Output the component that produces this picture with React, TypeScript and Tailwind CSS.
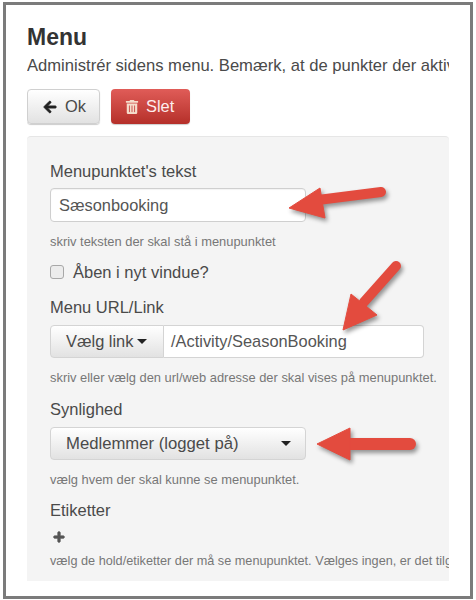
import { FaArrowLeft, FaTrashAlt, FaPlus } from "react-icons/fa";

function Caret() {
  return <span className="inline-block w-0 h-0 border-x-[5px] border-x-transparent border-t-[5px] border-t-[#222]" />;
}

function Help({ children, tight }: { children: string; tight?: boolean }) {
  return (
    <p className={tight ? "text-[12.7px] leading-[14px] text-[#777] whitespace-nowrap" : "text-[12.9px] leading-[14px] text-[#777] whitespace-nowrap"}>
      {children}
    </p>
  );
}

function Label({ children }: { children: string }) {
  return <div className="text-[16.5px] leading-[20px] text-[#4a4a4a]">{children}</div>;
}

export default function App() {
  return (
    <div className="relative w-[476px] h-[600px] bg-white overflow-hidden font-['Liberation_Sans',Arial,sans-serif]">
      <div className="ml-[3px] mt-[2px] w-[470px] h-[597px] border-[3px] border-[#7b7b7b] bg-white pl-[21px] pr-[21px] pt-[16px]">
        <div className="w-[422px] overflow-hidden">
          <h1 className="text-[23px] leading-[32px] font-bold text-[#333]">Menu</h1>
          <p className="mt-[3px] text-[16.6px] leading-[20px] text-[#4a4a4a] whitespace-nowrap">
            Administrér sidens menu. Bemærk, at de punkter der aktive
          </p>
          <div className="mt-[13px] flex gap-[11px]">
            <button className="w-[73px] h-[35px] flex items-center pl-[15px] gap-[8px] rounded-[4px] border border-[#d0d0d0] bg-gradient-to-b from-white to-[#e2e2e2] text-[16.4px] text-[#4a4a4a] shadow-[0_1px_1px_rgba(0,0,0,0.2)]">
              <FaArrowLeft className="text-[14px] text-[#222] stroke-[30px]" />
              Ok
            </button>
            <button className="w-[79px] h-[35px] flex items-center pl-[14px] gap-[7px] rounded-[4px] bg-gradient-to-b from-[#e05c58] to-[#b52f29] text-[16.4px] text-[#fdeeee] shadow-[0_1px_1px_rgba(0,0,0,0.2)]">
              <FaTrashAlt className="text-[14px] text-[#f5dccb]" />
              Slet
            </button>
          </div>
          <div className="mt-[12px] w-[422px] h-[445px] rounded-t-[4px] border-t border-t-[#e6e6e6] bg-[#f4f4f4] pl-[23px] pt-[24px]">
            <Label>Menupunktet's tekst</Label>
            <div className="mt-[7px] w-[256px] h-[34px] flex items-center px-[8px] rounded-[4px] border border-[#cfcfcf] bg-white text-[16.4px] text-[#555] shadow-[inset_0_1px_1px_rgba(0,0,0,0.05)]">
              Sæsonbooking
            </div>
            <div className="mt-[13px]"><Help>skriv teksten der skal stå i menupunktet</Help></div>
            <div className="mt-[13px] h-[20px] flex items-center gap-[9px]">
              <span className="w-[14px] h-[14px] rounded-[3px] border border-[#a8a8a8] bg-[#ececec]" />
              <span className="text-[16.5px] text-[#4a4a4a]">Åben i nyt vindue?</span>
            </div>
            <div className="mt-[15px]"><Label>Menu URL/Link</Label></div>
            <div className="mt-[8px] flex w-[374px] h-[33px]">
              <div className="w-[114px] flex items-center pl-[15px] gap-[4px] rounded-l-[4px] border border-[#d4d4d4] bg-gradient-to-b from-white to-[#e2e2e2] text-[16.4px] text-[#4a4a4a]">
                Vælg link <Caret />
              </div>
              <div className="flex-1 flex items-center pl-[7px] rounded-r-[4px] border border-l-0 border-[#d4d4d4] bg-white text-[16.4px] text-[#555]">
                /Activity/SeasonBooking
              </div>
            </div>
            <div className="mt-[13px]"><Help>skriv eller vælg den url/web adresse der skal vises på menupunktet.</Help></div>
            <div className="mt-[14px]"><Label>Synlighed</Label></div>
            <div className="mt-[8px] w-[256px] h-[33px] flex items-center justify-between pl-[15px] pr-[14px] rounded-[4px] border border-[#d4d4d4] bg-gradient-to-b from-white to-[#e2e2e2] text-[16.7px] text-[#4a4a4a]">
              Medlemmer (logget på) <Caret />
            </div>
            <div className="mt-[13px]"><Help>vælg hvem der skal kunne se menupunktet.</Help></div>
            <div className="mt-[13px]"><Label>Etiketter</Label></div>
            <div className="mt-[10px] ml-[3px] h-[14px] flex items-center">
              <FaPlus className="text-[12px] text-[#555] stroke-[40px]" />
            </div>
            <div className="mt-[10px]"><Help tight>vælg de hold/etiketter der må se menupunktet. Vælges ingen, er det tilgængeligt</Help></div>
          </div>
        </div>
      </div>
      <svg
        className="absolute left-0 top-0 pointer-events-none drop-shadow-[2px_3px_2px_rgba(0,0,0,0.4)]"
        width="476"
        height="600"
        viewBox="0 0 476 600"
      >
        <g fill="#e34b3e" stroke="#e34b3e" strokeLinejoin="round">
          <path d="M318 200 L381 192" strokeWidth="10" strokeLinecap="round" fill="none" />
          <path d="M289 208 L320 188 L325 218 Z" strokeWidth="1" />
          <path d="M364 302 L396 266" strokeWidth="10" strokeLinecap="round" fill="none" />
          <path d="M343 330 L351 294 L377 315 Z" strokeWidth="1" />
          <path d="M346 444 L410 444" strokeWidth="12" strokeLinecap="round" fill="none" />
          <path d="M317 444 L350 428 L350 460 Z" strokeWidth="1" />
        </g>
      </svg>
    </div>
  );
}
